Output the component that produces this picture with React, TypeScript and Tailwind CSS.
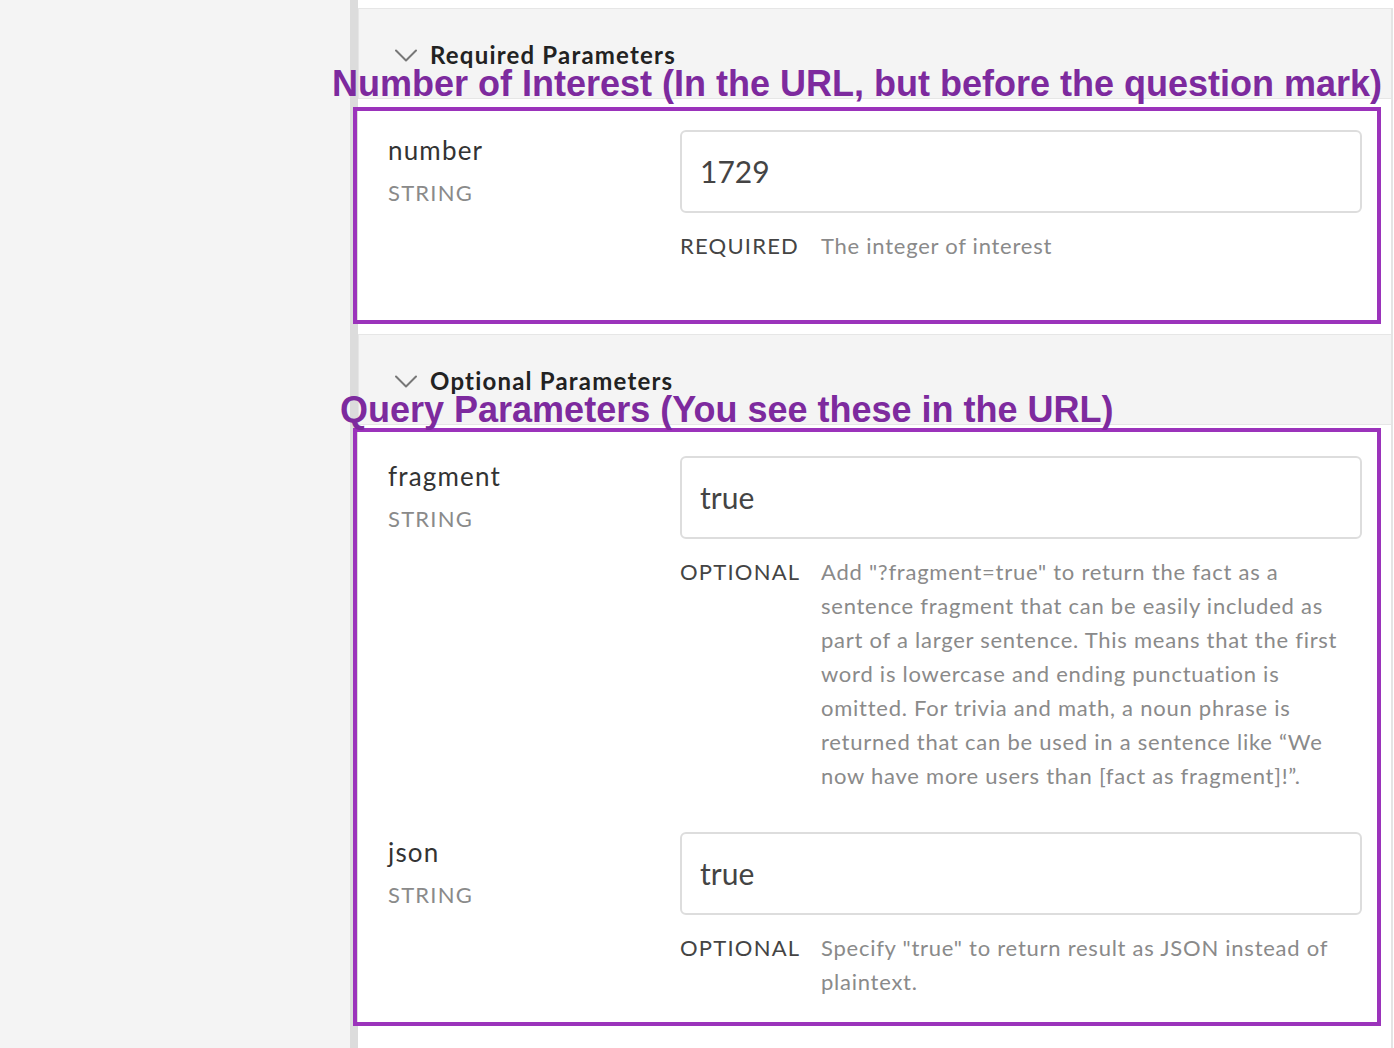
import React from "react";

type Param = {
  name: string;
  type: string;
  value: string;
  required: boolean;
  description: string;
};

const requiredParams: Param[] = [
  {
    name: "number",
    type: "STRING",
    value: "1729",
    required: true,
    description: "The integer of interest",
  },
];

const optionalParams: Param[] = [
  {
    name: "fragment",
    type: "STRING",
    value: "true",
    required: false,
    description:
      'Add "?fragment=true" to return the fact as a sentence fragment that can be easily included as part of a larger sentence. This means that the first word is lowercase and ending punctuation is omitted. For trivia and math, a noun phrase is returned that can be used in a sentence like \u201cWe now have more users than [fact as fragment]!\u201d.',
  },
  {
    name: "json",
    type: "STRING",
    value: "true",
    required: false,
    description: 'Specify "true" to return result as JSON instead of plaintext.',
  },
];

const Chevron = () => (
  <svg width="22" height="13" viewBox="0 0 22 13" fill="none" className="shrink-0">
    <path d="M1 1.5L11 11.5L21 1.5" stroke="#777" strokeWidth="2" strokeLinecap="round" strokeLinejoin="round" />
  </svg>
);

const SectionHeader = ({ title }: { title: string }) => (
  <div className="h-[91px] border-y border-l border-[#e6e6e6] bg-[#f4f4f4] pt-[30px] pl-[36px]">
    <div className="flex items-center gap-[13px] leading-[32px]">
      <Chevron />
      <span className="text-[24px] font-bold tracking-[0.05em] text-[#222]">{title}</span>
    </div>
  </div>
);

const ParamRow = ({ p }: { p: Param }) => (
  <div className="grid grid-cols-[292px_1fr]">
    <div>
      <div className="mt-[2px] text-[26px] leading-[36px] tracking-[0.045em] text-[#333]">{p.name}</div>
      <div className="mt-[8px] text-[22px] leading-[34px] tracking-[0.055em] text-[#8a8a8a]">{p.type}</div>
    </div>
    <div>
      <div className="flex h-[83px] items-center rounded-[6px] border-2 border-[#dddddd] bg-white pl-[18px] text-[30px] text-[#444]">
        {p.value}
      </div>
      <div className="mt-[16px] flex text-[22px] leading-[34px]">
        <span className="w-[141px] shrink-0 tracking-[0.055em] text-[#444]">{p.required ? "REQUIRED" : "OPTIONAL"}</span>
        <span className="tracking-[0.034em] text-[#8a8a8a]">{p.description}</span>
      </div>
    </div>
  </div>
);

const Annotation = ({ text, className }: { text: string; className: string }) => (
  <div
    className={`pointer-events-none absolute whitespace-nowrap font-['Liberation_Sans',Arial,sans-serif] text-[36px] leading-[36px] font-bold text-[#7d2a9e] ${className}`}
  >
    {text}
  </div>
);

export default function App() {
  return (
    <div className="relative flex min-h-[1048px] w-full bg-white font-['Lato','Noto_Sans',sans-serif]">
      <div className="w-[350px] shrink-0 bg-[#f4f4f4]" />
      <div className="w-2 shrink-0 bg-[#dcdcdc]" />
      <div className="flex-1 pt-2 pr-[1px]">
        <div className="border-r-2 border-[#e4e4e4]">
          <SectionHeader title="Required Parameters" />
          <div className="mt-2 mr-[10px] -ml-[5px] border-4 border-[#9b33bb] pt-[19px] pb-[57px] pl-[31px] pr-[15px]">
            {requiredParams.map((p) => (
              <ParamRow key={p.name} p={p} />
            ))}
          </div>
          <div className="h-[10px]" />
          <SectionHeader title="Optional Parameters" />
          <div className="mt-[3px] mr-[10px] -ml-[5px] flex flex-col gap-[39px] border-4 border-[#9b33bb] pt-[24px] pb-[23px] pl-[31px] pr-[15px]">
            {optionalParams.map((p) => (
              <ParamRow key={p.name} p={p} />
            ))}
          </div>
          <div className="h-[22px]" />
        </div>
      </div>
      <Annotation text="Number of Interest (In the URL, but before the question mark)" className="left-[332px] top-[66px]" />
      <Annotation text="Query Parameters (You see these in the URL)" className="left-[340px] top-[392px]" />
    </div>
  );
}
